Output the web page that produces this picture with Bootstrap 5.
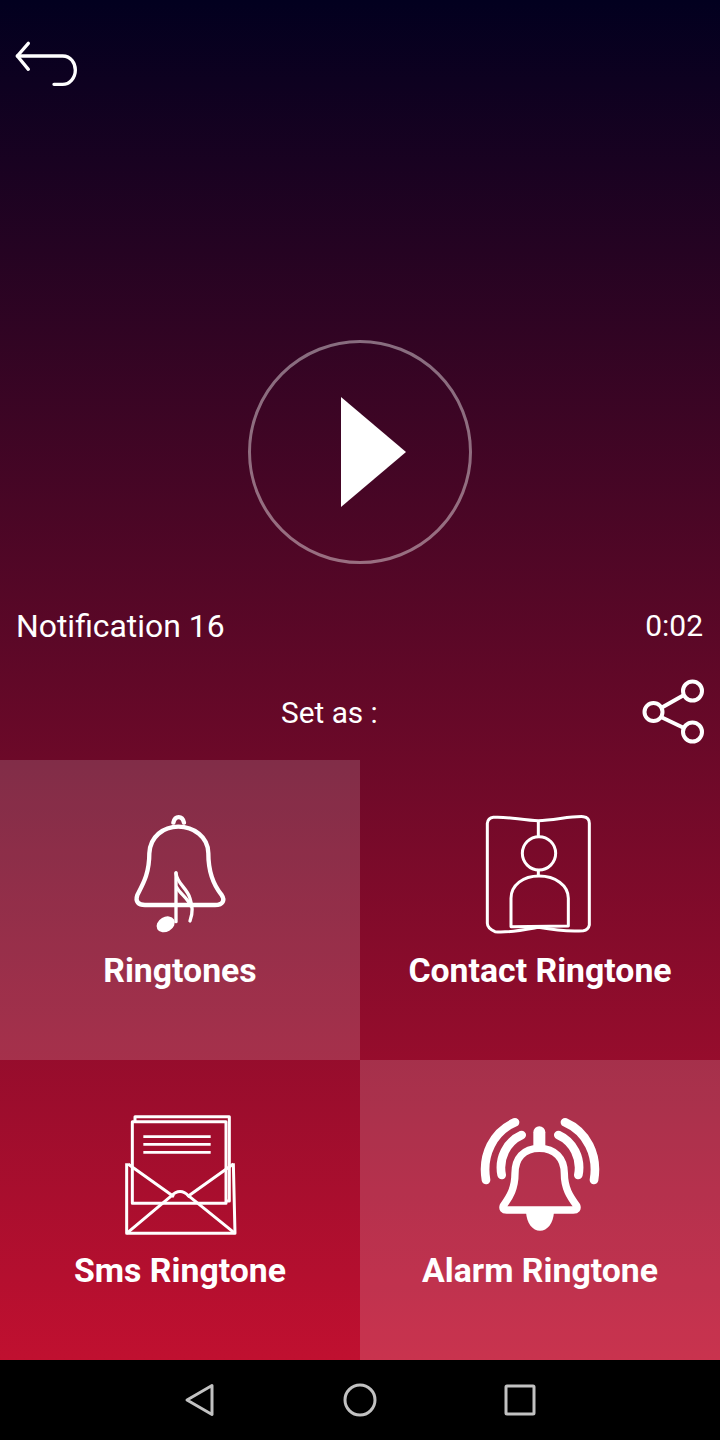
<!DOCTYPE html>
<html lang="en">
<head>
    <meta charset="UTF-8">
    <meta name="viewport" content="width=device-width, initial-scale=1.0">
    <title>Notification 16</title>
    <link href="https://cdn.jsdelivr.net/npm/bootstrap@5.3.0/dist/css/bootstrap.min.css" rel="stylesheet">
    <style>
        body { background: #000; font-family: Roboto, "Liberation Sans", sans-serif; color: #fff; }
        .screen { width: 720px; height: 1440px; }
        .player { height: 1360px; background: linear-gradient(180deg, #02001f 0%, #c01030 100%); }
        .back-wrap { padding-top: 20px; height: 100px; }
        .play-wrap { margin-top: 240px; height: 224px; }
        .title-row { margin-top: 42px; height: 40px; padding: 0 17px 0 16px; }
        .title-text { font-size: 31.9px; line-height: 40px; }
        .time-text { font-size: 30px; line-height: 40px; }
        .set-row { margin-top: 33px; height: 66px; padding: 0 15px 0 281px; }
        .set-text { font-size: 29.8px; line-height: 40px; padding-top: 2px; }
        .tile { height: 300px; padding-top: 30px; }
        .tile-light { background: rgba(255, 255, 255, .15); }
        .tile-label { font-size: 33.8px; line-height: 42px; font-weight: 700; }
        .soft-nav { height: 80px; background: #000; }
        .soft-slot { width: 160px; }
        svg { display: block; }
    </style>
</head>
<body>
    <div class="screen d-flex flex-column">
        <div class="player d-flex flex-column">
            <div class="back-wrap">
                <svg width="100" height="80" viewBox="0 0 300 240" fill="none" stroke="#fff" stroke-width="10" stroke-linecap="round" stroke-linejoin="round">
                    <path d="M85 70L52 108L85 148"/>
                    <path d="M52 108H188C213 108 226 130 226 150C226 175 208 193 188 193H162"/>
                </svg>
            </div>
            <div class="play-wrap d-flex justify-content-center">
                <svg width="224" height="224" viewBox="0 0 224 224">
                    <circle cx="112" cy="112" r="110.5" fill="none" stroke="#fff" stroke-opacity=".42" stroke-width="3"/>
                    <path d="M93 57V167L158 112Z" fill="#fff"/>
                </svg>
            </div>
            <div class="title-row d-flex justify-content-between align-items-center">
                <span class="title-text">Notification 16</span>
                <span class="time-text">0:02</span>
            </div>
            <div class="set-row d-flex justify-content-between align-items-center">
                <span class="set-text">Set as :</span>
                <svg width="64" height="66" viewBox="0 0 64 66" fill="none" stroke="#fff" stroke-width="4">
                    <circle cx="51.500" cy="12" r="9.500"/>
                    <circle cx="12.500" cy="33" r="9"/>
                    <circle cx="51.500" cy="53" r="9.500"/>
                    <path d="M20 29L43 16M20 38L43 49"/>
                </svg>
            </div>
            <div class="row g-0 mt-auto">
                <div class="col-6 tile tile-light d-flex flex-column align-items-center">
                    <svg width="160" height="160" viewBox="0 0 480 480" fill="none" stroke="#fff" stroke-width="13" stroke-linecap="round" stroke-linejoin="round">
                        <path d="M220 98C225 76 247 76 252 98"/>
                        <path d="M235 110C190 110 150 140 148 190C148 250 130 280 112 315C105 335 115 345 135 345H345C370 345 375 330 365 315C340 285 325 250 325 190C325 140 280 110 235 110Z"/>
                        <path d="M228 248V395" stroke-width="10"/>
                        <path d="M228 250C232 282 262 295 270 325C277 350 280 365 270 393" stroke-width="10"/>
                        <path d="M230 292C240 312 262 322 272 348" stroke-width="10"/>
                        <ellipse cx="197" cy="403" rx="29" ry="22" transform="rotate(-30 197 403)" fill="#fff" stroke="none"/>
                    </svg>
                    <div class="tile-label">Ringtones</div>
                </div>
                <div class="col-6 tile d-flex flex-column align-items-center">
                    <svg width="160" height="160" viewBox="0 0 480 480" fill="none" stroke="#fff" stroke-width="9" stroke-linejoin="round">
                        <path d="M100 82C140 78 190 92 235 92C280 92 330 78 370 80Q388 82 388 100V405Q385 420 370 422C330 425 280 420 235 412C190 420 140 430 105 425Q82 415 82 400V100Q84 84 100 82Z"/>
                        <path d="M235 92V142M235 240V256"/>
                        <circle cx="237" cy="190" r="50"/>
                        <path d="M153 410V325C153 285 190 258 237 258C285 258 325 285 325 325V408Z"/>
                    </svg>
                    <div class="tile-label">Contact Ringtone</div>
                </div>
                <div class="col-6 tile d-flex flex-column align-items-center">
                    <svg width="160" height="160" viewBox="0 -15 480 480" fill="none" stroke="#fff" stroke-width="9" stroke-linejoin="round">
                        <path d="M105 80V65H388V318H378"/>
                        <path d="M97 325V80H378V325Z"/>
                        <path d="M130 125H332M130 148H332M130 172H332" stroke-width="8"/>
                        <path d="M80 205V415H405L400 205"/>
                        <path d="M84 207L222 305M400 207L262 305"/>
                        <path d="M80 415L215 302C230 285 250 285 265 302L405 415"/>
                    </svg>
                    <div class="tile-label">Sms Ringtone</div>
                </div>
                <div class="col-6 tile tile-light d-flex flex-column align-items-center">
                    <svg width="160" height="160" viewBox="0 -15 480 480" fill="none" stroke="#fff" stroke-linecap="round" stroke-linejoin="round">
                        <path d="M78 255C65 180 100 110 165 82M125 240C115 190 140 140 185 120M402 255C415 180 380 110 315 82M355 240C365 190 340 140 295 120" stroke-width="26"/>
                        <path d="M238 112V150" stroke-width="36"/>
                        <path d="M238 160C190 160 165 190 165 235C165 280 150 305 130 332Q125 345 140 345H340Q355 345 350 332C330 305 313 280 313 235C313 190 285 160 238 160Z" stroke-width="22"/>
                        <path d="M198 350H282C280 385 262 407 240 407C218 407 200 385 198 350Z" fill="#fff" stroke="none"/>
                    </svg>
                    <div class="tile-label">Alarm Ringtone</div>
                </div>
            </div>
        </div>
        <div class="soft-nav d-flex justify-content-center align-items-center">
            <div class="soft-slot d-flex justify-content-center">
                <svg width="40" height="40" viewBox="0 0 40 40" fill="none" stroke="#c2c2c2" stroke-width="3" stroke-linejoin="round"><path d="M32 5.500L7 20L32 34.500Z"/></svg>
            </div>
            <div class="soft-slot d-flex justify-content-center">
                <svg width="40" height="40" viewBox="0 0 40 40" fill="none" stroke="#c2c2c2" stroke-width="3"><circle cx="20" cy="20" r="15"/></svg>
            </div>
            <div class="soft-slot d-flex justify-content-center">
                <svg width="40" height="40" viewBox="0 0 40 40" fill="none" stroke="#c2c2c2" stroke-width="3" stroke-linejoin="round"><rect x="6" y="6" width="28" height="28" rx="1"/></svg>
            </div>
        </div>
    </div>
    <script src="https://cdn.jsdelivr.net/npm/bootstrap@5.3.0/dist/js/bootstrap.bundle.min.js"></script>
</body>
</html>
